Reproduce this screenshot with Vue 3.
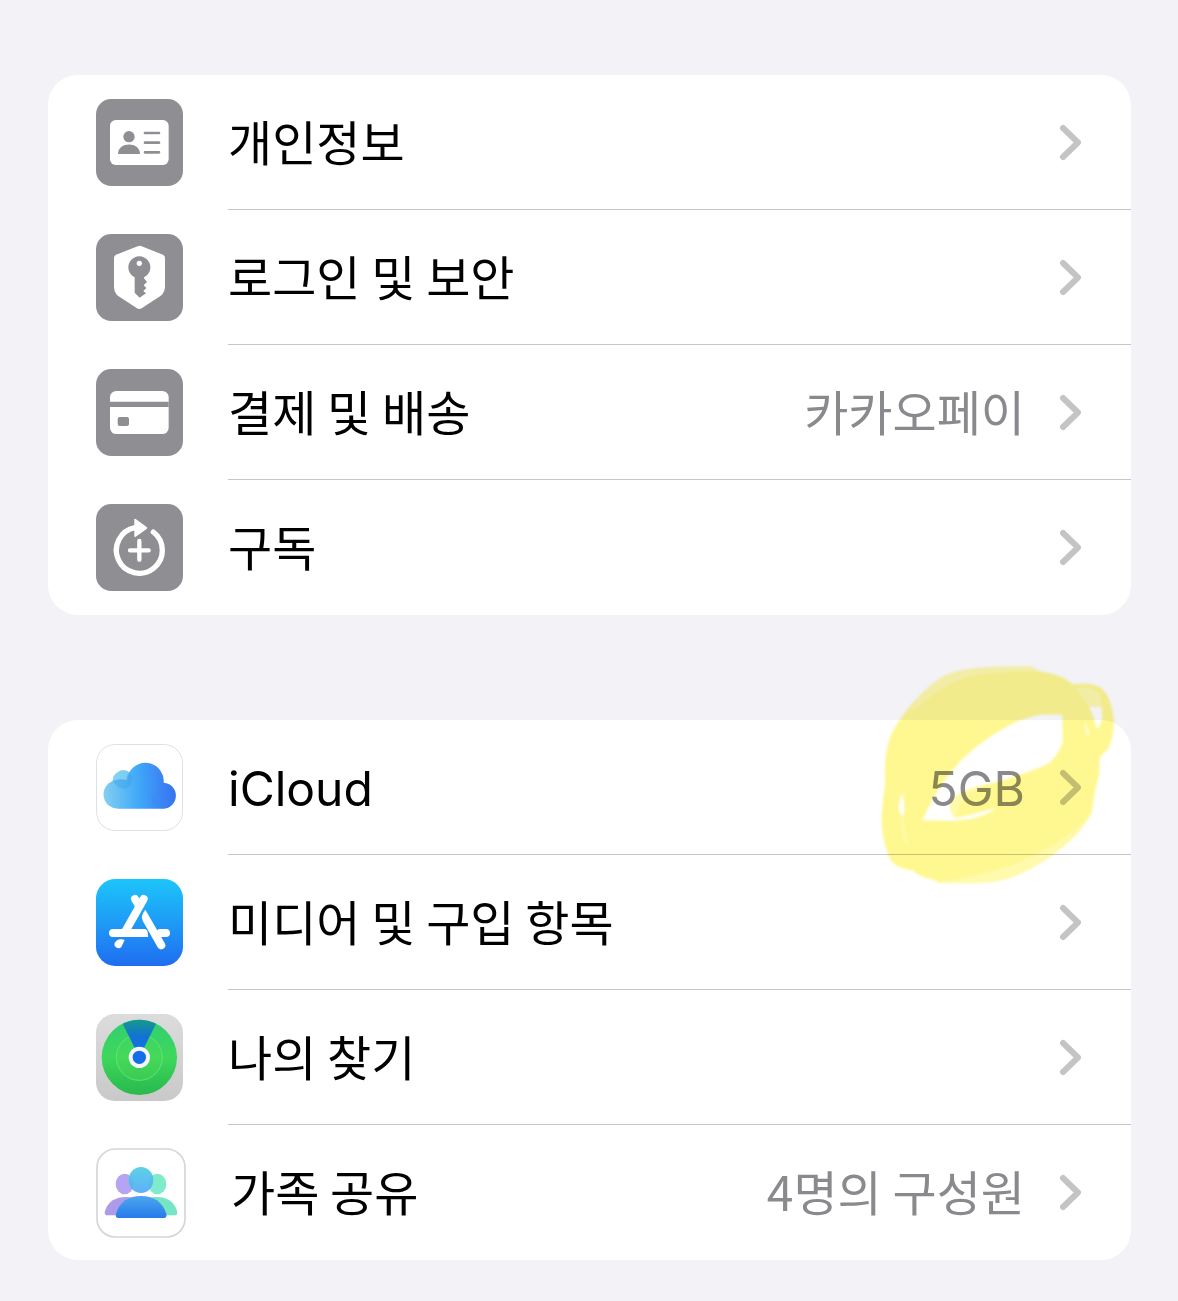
<template>
  <main class="settings">
    <ul v-for="(group, index) in groups" :key="index" class="group">
      <li v-for="item in group" :key="item.id">
        <a class="row" href="#">
          <svg class="icon" :class="item.id" :viewBox="item.box" aria-hidden="true">
            <template v-if="item.id === 'personal'">
              <rect x="48" y="42" width="261" height="261" rx="46" fill="#8e8e93" />
              <rect x="90" y="105" width="176" height="135" rx="17" fill="#fff" />
              <circle cx="147" cy="155" r="17" fill="#8e8e93" />
              <path d="M114 207c0-38 66-38 66 0z" fill="#8e8e93" />
              <path d="M195 144h42M195 173h42M195 202h42" stroke="#8e8e93" stroke-width="8" stroke-linecap="round" />
            </template>

            <template v-else-if="item.id === 'security'">
              <rect x="33" y="27" width="261" height="261" rx="46" fill="#8e8e93" />
              <path d="M158 64q6-3 12 0l64 25q6 3 6 10v88q0 13-9 22-6 5-15 11l-46 30q-7 4-14 0l-46-30q-9-6-15-11-8-9-8-22V99q0-7 6-10z" fill="#fff" />
              <path d="M149 157a33 33 0 1 1 28 0v3l9 11-10 10 8 8-9 9 8 7-19 13-15-15z" fill="#8e8e93" />
              <circle cx="163" cy="115" r="8" fill="#fff" />
            </template>

            <template v-else-if="item.id === 'payment'">
              <rect x="33" y="27" width="261" height="261" rx="46" fill="#8e8e93" />
              <rect x="75" y="93" width="176" height="129" rx="19" fill="#fff" />
              <path d="M75 125h176v16H75z" fill="#8e8e93" />
              <rect x="98" y="171" width="34" height="27" rx="6" fill="#8e8e93" />
            </template>

            <template v-else-if="item.id === 'subscription'">
              <rect x="33" y="27" width="261" height="261" rx="46" fill="#8e8e93" />
              <path d="M205 111a69 69 0 1 1-55-13" fill="none" stroke="#fff" stroke-width="16" stroke-linecap="round" />
              <path d="M148 73q0-3 4-1l33 24q3 3 0 6l-33 23q-4 2-4-2z" fill="#fff" />
              <path d="M163 138v56M135 166h56" stroke="#fff" stroke-width="13" stroke-linecap="round" />
            </template>

            <template v-else-if="item.id === 'icloud'">
              <defs>
                <linearGradient id="cloud" gradientUnits="userSpaceOnUse" x1="57" y1="200" x2="268" y2="190">
                  <stop offset="0" stop-color="#83cff0" />
                  <stop offset=".5" stop-color="#3fa8f8" />
                  <stop offset="1" stop-color="#3b72f3" />
                </linearGradient>
              </defs>
              <rect x="34.5" y="28.5" width="258" height="258" rx="56" fill="#fff" stroke="#e0e0e2" stroke-width="3" />
              <path d="M101 221a43 43 0 0 1-18-83 32 32 0 0 1 50-26 55 55 0 0 1 103 31 39 39 0 0 1-5 78z" fill="url(#cloud)" />
              <path d="M83 138a32 32 0 0 1 50-26l-8 24q-20-8-42 2z" fill="#a0e4ef" opacity=".5" />
              <path d="M125 136q-4-12 8-24 8 7 10 20-6 21-20 29-25 2-40-23 20-9 42-2z" fill="#2b9be0" opacity=".3" />
              <path d="M236 143a39 39 0 0 1-5 78q-60-8-5-78z" fill="#2d87f5" opacity=".18" />
            </template>

            <template v-else-if="item.id === 'store'">
              <defs>
                <linearGradient id="store" x1="0" y1="0" x2="0" y2="1">
                  <stop offset="0" stop-color="#1cc5fa" />
                  <stop offset=".5" stop-color="#1e9bf6" />
                  <stop offset="1" stop-color="#1f6df0" />
                </linearGradient>
              </defs>
              <rect x="33" y="27" width="261" height="261" rx="58" fill="url(#store)" />
              <path d="M150 87l13 22M176 87l-56 99M84 189h92M226 189h17" fill="none" stroke="#fff" stroke-width="24" stroke-linecap="round" />
              <path d="M181 119l58 100a12 12 0 0 1-21 13l-45-80q-7-14 8-33z" fill="#fff" />
              <path d="M176 177h4q9 9 9 24h-13z" fill="#fff" />
              <path d="M89 219q7-11 17-11 8-1 13 2l-10 21a12 12 0 0 1-20-12z" fill="#fff" />
            </template>

            <template v-else-if="item.id === 'find'">
              <defs>
                <linearGradient id="findBack" x1="0" y1="0" x2="0" y2="1">
                  <stop offset="0" stop-color="#dcdcdc" />
                  <stop offset="1" stop-color="#c9c9c9" />
                </linearGradient>
                <linearGradient id="findDisc" x1="0" y1="0" x2="0" y2="1">
                  <stop offset="0" stop-color="#30cf70" />
                  <stop offset=".5" stop-color="#3dd85b" />
                  <stop offset="1" stop-color="#29b84e" />
                </linearGradient>
                <linearGradient id="findBeam" x1="0" y1="0" x2="0" y2="1">
                  <stop offset="0" stop-color="#159a8b" />
                  <stop offset=".45" stop-color="#1272d5" />
                  <stop offset="1" stop-color="#1670ec" />
                </linearGradient>
              </defs>
              <rect x="33" y="27" width="261" height="261" rx="56" fill="url(#findBack)" />
              <circle cx="163" cy="157" r="113" fill="url(#findDisc)" />
              <circle cx="163" cy="157" r="69" fill="#5bdc55" fill-opacity=".25" stroke="#62e17c" stroke-width="3" />
              <path d="M113 56q50-24 100 0l-50 101z" fill="url(#findBeam)" />
              <circle cx="163" cy="157" r="32" fill="#f4f7ff" />
              <circle cx="163" cy="157" r="20" fill="#126fe9" />
            </template>

            <template v-else>
              <defs>
                <linearGradient id="familyHead" x1="0" y1="0" x2="0" y2="1">
                  <stop offset="0" stop-color="#51cfe3" />
                  <stop offset="1" stop-color="#55aaf7" />
                </linearGradient>
                <linearGradient id="familyBody" x1="0" y1="0" x2="0" y2="1">
                  <stop offset="0" stop-color="#4ea6f0" />
                  <stop offset="1" stop-color="#267be9" />
                </linearGradient>
              </defs>
              <rect x="36" y="24" width="264" height="264" rx="55" fill="#fff" stroke="#d6d6d8" stroke-width="5" />
              <ellipse cx="119" cy="129" rx="27" ry="31" fill="#b6a4f2" />
              <ellipse cx="217" cy="129" rx="27" ry="31" fill="#7eeccb" />
              <ellipse cx="168" cy="117" rx="37" ry="39" fill="url(#familyHead)" opacity=".94" />
              <path d="M64 223q-7-3-4-13c9-29 33-42 62-42 18 0 35 6 46 15v40z" fill="#ac9bea" />
              <path d="M272 223q7-3 4-13c-9-29-31-42-60-42-18 0-37 6-48 15v40z" fill="#76e5c4" />
              <path d="M101 231q-11 0-8-12c10-37 38-54 75-54s65 17 76 54q3 12-8 12z" fill="url(#familyBody)" />
            </template>
          </svg>

          <span class="body">
            <span class="label"><span :class="{ latin: item.latin }">{{ item.label }}</span></span>
            <span v-if="item.value" class="value"><span :class="{ latin: item.latin }">{{ item.value }}</span></span>
            <svg class="chevron" viewBox="0 0 23 37" aria-hidden="true">
              <path d="M4 4l15 14.5L4 33" />
            </svg>
          </span>

          <!-- highlighter ring around the storage value -->
          <svg v-if="item.marked" class="marker" viewBox="0 0 870 750" aria-hidden="true">
            <defs>
              <filter id="soft" x="-5%" y="-5%" width="110%" height="110%">
                <feGaussianBlur stdDeviation="2.5" />
              </filter>
            </defs>
            <g filter="url(#soft)">
              <path
                fill="#fff891"
                fill-rule="evenodd"
                d="M98 245C130 185 185 125 235 88 280 58 340 48 510 49L548 66C590 72 615 82 637 103 675 98 716 102 730 120 750 142 759 180 761 205 764 240 755 280 742 299L720 321 717 378C704 420 700 455 695 490 670 535 625 585 555 631 500 665 460 688 400 696 350 701 290 700 237 698L215 687C187 685 172 672 157 661 125 655 104 650 90 626 72 590 65 545 65 505 65 470 73 430 76 385 70 340 80 280 98 245Z
                M187 511C210 460 250 385 310 325 370 270 440 220 515 200 545 192 580 194 607 194L608 278C595 310 575 340 548 349 510 365 450 385 395 400 330 412 285 430 272 460 266 475 273 494 285 503 325 499 360 484 407 476 370 502 320 512 270 512Z
                M686 170L724 170 727 203 718 231 709 235C706 212 698 188 686 170Z
                M126 430C133 448 135 475 131 497 119 494 115 480 117 460Z"
              />
              <path class="thin" d="M235 88C280 58 340 48 510 49L548 66C470 65 360 62 285 95 230 118 180 165 145 190 170 150 200 115 235 88Z" />
              <path class="thin" d="M695 490C600 590 500 635 390 665 350 678 270 688 237 698 290 701 350 701 400 696 500 686 610 600 695 490Z" />
              <path class="thin" d="M645 115C680 110 708 116 720 135L724 169H686C675 148 662 130 645 115Z" />
              <path class="thin" d="M240 410C290 335 370 265 455 230L500 207C420 235 350 280 300 335Z" />
              <path class="thin" d="M408 400C370 400 295 435 289 500L272 495C268 440 310 415 408 400Z" />
              <path class="thin" d="M128 500C132 535 139 565 147 588 134 581 126 540 120 498Z" />
              <path class="streak" d="M674 218C681 229 686 242 686 258 679 252 674 238 674 218Z" />
            </g>
          </svg>
        </a>
      </li>
    </ul>
  </main>
</template>

<script setup>
const box = '33 27 261 261'

const groups = [
  [
    { id: 'personal', label: '개인정보', box: '48 42 261 261' },
    { id: 'security', label: '로그인 및 보안', box },
    { id: 'payment', label: '결제 및 배송', value: '카카오페이', box },
    { id: 'subscription', label: '구독', box }
  ],
  [
    { id: 'icloud', label: 'iCloud', value: '5GB', latin: true, marked: true, box },
    { id: 'store', label: '미디어 및 구입 항목', box },
    { id: 'find', label: '나의 찾기', box },
    { id: 'family', label: '가족 공유', value: '4명의 구성원', box: '33 21 270 270' }
  ]
]
</script>

<style>
body {
  margin: 0;
  background: #f2f2f7;
}
</style>

<style scoped>
.settings {
  box-sizing: border-box;
  min-height: 100vh;
  padding: 75px 47px 41px 48px;
  display: flex;
  flex-direction: column;
  gap: 105px;
  background: #f2f2f7;
  font-family: "Noto Sans CJK KR", sans-serif;
  font-size: 48px;
  line-height: 64px;
}

.group {
  list-style: none;
  margin: 0;
  padding: 0;
  background: #fff;
  border-radius: 30px;
}

.row {
  position: relative;
  height: 135px;
  padding-left: 48px;
  display: flex;
  align-items: center;
  gap: 45px;
  color: #000;
  text-decoration: none;
}

.icon {
  width: 87px;
  height: 87px;
  flex-shrink: 0;
}

.icon.family {
  width: 90px;
  height: 90px;
}

.body {
  box-sizing: border-box;
  height: 100%;
  flex: 1;
  display: flex;
  align-items: center;
  padding-right: 49px;
  border-bottom: 1px solid #c6c6c8;
}

li:last-child .body {
  border-bottom-color: transparent;
}

.label,
.value {
  padding-bottom: 4px;
}

.label {
  flex: 1;
}

.value {
  color: #8a8a8e;
}

.latin {
  font-family: Inter, sans-serif;
  line-height: 1;
}

.chevron {
  width: 23px;
  height: 37px;
  margin-left: 34px;
  flex-shrink: 0;
  fill: none;
  stroke: #c4c4c6;
  stroke-width: 6;
  stroke-linecap: round;
  stroke-linejoin: round;
}

.marker {
  position: absolute;
  top: -70px;
  right: -19px;
  width: 290px;
  height: 250px;
  mix-blend-mode: multiply;
  pointer-events: none;
}

.thin {
  fill: #fff;
  opacity: 0.25;
}

.streak {
  fill: #fff;
  opacity: 0.7;
}
</style>
